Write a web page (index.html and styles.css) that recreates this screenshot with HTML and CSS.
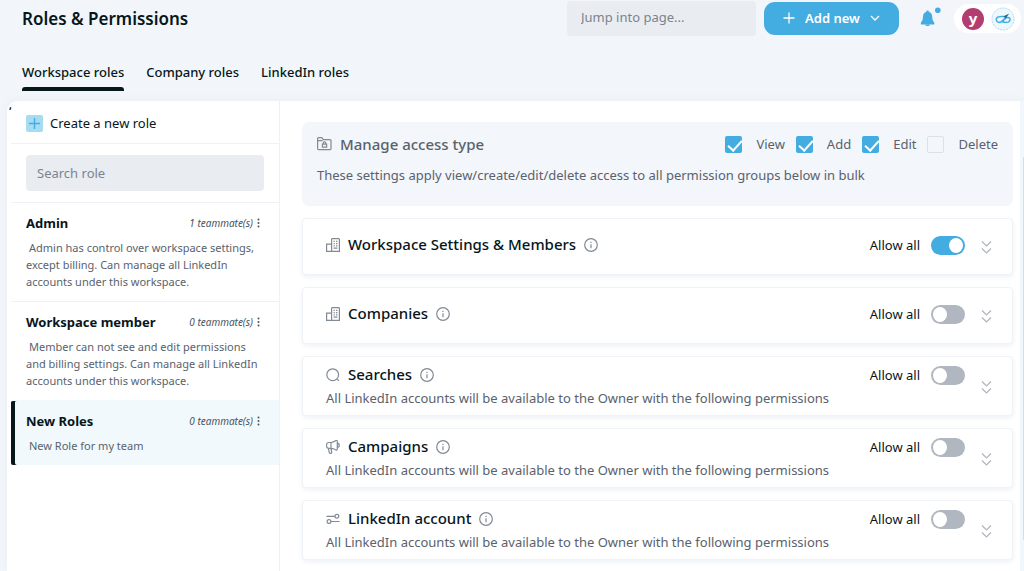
FILE: index.html
```html
<!DOCTYPE html>
<html lang="en">
<head>
<meta charset="utf-8">
<title>Roles &amp; Permissions</title>
<link rel="stylesheet" href="styles.css">
</head>
<body>
<svg class="sprite" aria-hidden="true">
  <symbol id="info" viewBox="0 0 14 14"><circle cx="7" cy="7" r="6.3"/><path d="M7 6.3v3.9M7 3.8v1.3"/></symbol>
  <symbol id="building" viewBox="0 0 14 14"><path d="M5.6 6.2H.6V13.300H13.400V1.200L12.800.6H6.200L5.600 1.200V13.300M7.600 3.300h1.200M10 3.300h1.400M7.600 5.600h1.200M10 5.600h1.400M7.600 7.900h1.200M10 7.900h1.400M7.600 10.200h3.800"/></symbol>
  <symbol id="chevrons" viewBox="0 0 11 15"><path d="M1 1.500l4.500 4.500L10 1.500M1 8.500L5.500 13 10 8.500"/></symbol>
  <symbol id="dots" viewBox="0 0 3 10"><circle cx="1.500" cy="1.500" r="1"/><circle cx="1.500" cy="5" r="1"/><circle cx="1.500" cy="8.500" r="1"/></symbol>
</svg>

<header class="topbar">
  <h1 class="page-title">Roles &amp; Permissions</h1>
  <input class="field jump" type="text" placeholder="Jump into page..." aria-label="Jump into page">
  <button class="add-button" type="button">
    <svg width="12" height="12" viewBox="0 0 12 12"><path d="M6 .5v11M.5 6h11"/></svg>
    Add new
    <svg width="10" height="6" viewBox="0 0 10 6"><path d="M1 1l4 4 4-4"/></svg>
  </button>
  <button class="bell" type="button" aria-label="Notifications">
    <svg width="22" height="22" viewBox="0 0 22 22"><path d="M7.200 5a1.400 1.400 0 0 1 2.800 0c2 .6 2.900 2 3.100 3.800.3 3.600.6 5.200 2.200 6.800v1.800H1.900v-1.800C3.500 14 3.800 12.400 4.100 8.800 4.300 7 5.200 5.600 7.200 5z"/><path d="M6.100 17.400h5c-.4 2.200-4.600 2.200-5 0z"/><circle cx="18.800" cy="3.300" r="2.800"/></svg>
  </button>
  <button class="account" type="button" aria-label="Account">
    <span class="avatar">y</span>
    <svg class="team" width="24" height="24" viewBox="0 0 24 24"><circle class="ring" cx="12" cy="12" r="11"/><path class="link" d="M12.800 9.500C10.500 9.300 7 9.200 5.700 11c-1.300 2 .2 4.400 2.500 4.400 3 0 4.300-4 7-4.800M11.500 14.800c2.300.8 6.200 1 7.300-1.200.9-1.900-.4-3.300-2.200-3.200-2.700.2-3.900 3.800-6 4.500"/><path class="pen" d="M12 9.400l6.200-3-3.600 5.300-1.200-1.400z"/></svg>
  </button>
</header>

<nav class="tabs">
  <a class="tab tab-active" href="#workspace">Workspace roles</a>
  <a class="tab" href="#company">Company roles</a>
  <a class="tab" href="#linkedin">LinkedIn roles</a>
</nav>

<main class="panel">
  <span class="stray">,</span>
  <aside class="sidebar">
    <button class="create" type="button">
      <svg width="17" height="17" viewBox="0 0 17 17"><rect width="17" height="17" rx="2"/><path d="M8.500 3v11M3 8.500h11"/></svg>
      Create a new role
    </button>
    <div class="search-row"><input class="field" type="text" placeholder="Search role" aria-label="Search role"></div>
    <section class="role">
      <div class="role-head"><h2>Admin</h2><em>1 teammate(s)</em><button type="button" aria-label="Admin options"><svg width="3" height="10"><use href="#dots"/></svg></button></div>
      <p>Admin has control over workspace settings, except billing. Can manage all LinkedIn accounts under this workspace.</p>
    </section>
    <section class="role">
      <div class="role-head"><h2>Workspace member</h2><em>0 teammate(s)</em><button type="button" aria-label="Workspace member options"><svg width="3" height="10"><use href="#dots"/></svg></button></div>
      <p>Member can not see and edit permissions and billing settings. Can manage all LinkedIn accounts under this workspace.</p>
    </section>
    <section class="role role-selected">
      <div class="role-head"><h2>New Roles</h2><em>0 teammate(s)</em><button type="button" aria-label="New Roles options"><svg width="3" height="10"><use href="#dots"/></svg></button></div>
      <p>New Role for my team</p>
    </section>
  </aside>

  <div class="content">
    <section class="bulk">
      <div class="bulk-head">
        <svg class="icon" width="15" height="14" viewBox="0 0 15 14"><path d="M.6 3.600V1.600a1 1 0 0 1 1-1h3.100l1.700 2h6.400a1.200 1.200 0 0 1 1.200 1.200v7.600a1.200 1.200 0 0 1-1.200 1.200h-11A1.200 1.200 0 0 1 .6 11.400V3.600h5M5.400 7.200h4.200v2.900H5.400zM6.200 7.200V6.200a1.300 1.300 0 0 1 2.600 0v1"/></svg>
        <h2>Manage access type</h2>
        <div class="checks">
          <label><input type="checkbox" checked>View</label>
          <label><input type="checkbox" checked>Add</label>
          <label><input type="checkbox" checked>Edit</label>
          <label><input type="checkbox">Delete</label>
        </div>
      </div>
      <p>These settings apply view/create/edit/delete access to all permission groups below in bulk</p>
    </section>

    <section class="card">
      <div class="card-body"><div class="card-head">
        <svg class="icon" width="14" height="14"><use href="#building"/></svg><h3>Workspace Settings &amp; Members</h3><svg class="icon info" width="14" height="14"><use href="#info"/></svg>
        <label class="allow">Allow all<input class="switch" type="checkbox" role="switch" checked></label>
      </div></div>
      <button class="expand" type="button" aria-label="Expand Workspace Settings &amp; Members"><svg width="11" height="15"><use href="#chevrons"/></svg></button>
    </section>
    <section class="card">
      <div class="card-body"><div class="card-head">
        <svg class="icon" width="14" height="14"><use href="#building"/></svg><h3>Companies</h3><svg class="icon info" width="14" height="14"><use href="#info"/></svg>
        <label class="allow">Allow all<input class="switch" type="checkbox" role="switch"></label>
      </div></div>
      <button class="expand" type="button" aria-label="Expand Companies"><svg width="11" height="15"><use href="#chevrons"/></svg></button>
    </section>
    <section class="card card-detailed">
      <div class="card-body"><div class="card-head">
        <svg class="icon" width="14" height="14" viewBox="0 0 14 14"><circle cx="6.700" cy="6.700" r="5.900"/><path d="M10.900 10.900l2 2"/></svg><h3>Searches</h3><svg class="icon info" width="14" height="14"><use href="#info"/></svg>
        <label class="allow">Allow all<input class="switch" type="checkbox" role="switch"></label>
      </div>
      <p>All LinkedIn accounts will be available to the Owner with the following permissions</p></div>
      <button class="expand" type="button" aria-label="Expand Searches"><svg width="11" height="15"><use href="#chevrons"/></svg></button>
    </section>
    <section class="card card-detailed">
      <div class="card-body"><div class="card-head">
        <svg class="icon" width="14" height="14" viewBox="0 0 14 14"><path d="M5 2.500H2.800A2.200 2.200 0 0 0 .6 4.700v1.500a2.200 2.200 0 0 0 2.200 2.200H5c2 0 3.500.6 5 1.500.6.400 1.300.1 1.300-.6V1.200c0-.7-.7-1-1.300-.6C8.500 1.600 7 2.500 5 2.500zM5 2.500v5.900M2.400 8.400l.8 4c.1.600.5.900 1 .9h.7c.6 0 .9-.5.800-1L5 8.400M11.300 3.100c2.600 0 2.600 4.300 0 4.300"/></svg><h3>Campaigns</h3><svg class="icon info" width="14" height="14"><use href="#info"/></svg>
        <label class="allow">Allow all<input class="switch" type="checkbox" role="switch"></label>
      </div>
      <p>All LinkedIn accounts will be available to the Owner with the following permissions</p></div>
      <button class="expand" type="button" aria-label="Expand Campaigns"><svg width="11" height="15"><use href="#chevrons"/></svg></button>
    </section>
    <section class="card card-detailed">
      <div class="card-body"><div class="card-head">
        <svg class="icon" width="14" height="14" viewBox="0 0 14 14"><circle cx="10.900" cy="4.300" r="1.900"/><path d="M.5 4.300H9M5 9.500h8.500"/><circle cx="3" cy="9.500" r="1.900"/></svg><h3>LinkedIn account</h3><svg class="icon info" width="14" height="14"><use href="#info"/></svg>
        <label class="allow">Allow all<input class="switch" type="checkbox" role="switch"></label>
      </div>
      <p>All LinkedIn accounts will be available to the Owner with the following permissions</p></div>
      <button class="expand" type="button" aria-label="Expand LinkedIn account"><svg width="11" height="15"><use href="#chevrons"/></svg></button>
    </section>
  </div>
  <div class="scroll-track"><div class="scroll-thumb"></div></div>
</main>
</body>
</html>
```
FILE: styles.css
```css
* { box-sizing: border-box; }
body {
  margin: 0;
  min-height: 100vh;
  display: flex;
  flex-direction: column;
  background: #f2f6fa;
  color: #07161b;
  font: 13px/20px "Noto Sans", sans-serif;
}
h1, h2, h3, p { margin: 0; }
button { border: 0; padding: 0; background: none; font: inherit; color: inherit; }
svg { flex: none; display: block; fill: none; }
.sprite { position: absolute; width: 0; height: 0; }
.icon { stroke: #828a94; stroke-width: 1.2; }

.topbar { display: flex; align-items: center; height: 37px; padding: 0 3px 0 22px; }
.page-title { margin-right: auto; font-size: 17px; font-weight: 600; }
.field {
  display: block;
  width: 100%;
  height: 36px;
  border: 0;
  border-radius: 4px;
  padding: 0 11px;
  background: #e9edf2;
  font: inherit;
  color: #07161b;
}
.field::placeholder { color: #7b838e; opacity: 1; }
.jump { width: 189px; height: 35px; margin-right: 8px; padding: 0 14px 4px; }
.add-button {
  display: flex;
  align-items: center;
  justify-content: center;
  gap: 10px;
  width: 135px;
  height: 33px;
  padding-bottom: 1px;
  border-radius: 11px;
  background: #43ace1;
  color: #fff;
  font-weight: 600;
}
.add-button svg { stroke: #fff; stroke-width: 1.3; }
.bell { margin: 0 13px 0 20px; padding-bottom: 1px; }
.bell svg { fill: #43ace1; }
.account {
  display: flex;
  align-items: center;
  gap: 7px;
  height: 29px;
  padding: 0 6px 0 8px;
  border-radius: 15px;
  background: #fff;
}
.avatar {
  width: 22px;
  height: 22px;
  border-radius: 50%;
  background: #b43d70;
  color: #fff;
  font-size: 15px;
  font-weight: 700;
}
.ring { fill: #edf8fd; stroke: #a9daf2; stroke-width: 1; stroke-dasharray: 2 1; }
.link { stroke: #43ace1; stroke-width: 1.5; }
.pen { fill: #276b8c; }

.tabs { display: flex; gap: 22px; height: 64px; padding: 25px 22px 0; }
.tab { height: 29px; border-bottom: 3px solid transparent; color: inherit; font-weight: 500; text-decoration: none; }
.tab-active { position: relative; }
.tab-active::after {
  content: "";
  position: absolute;
  inset: auto 0 -3px;
  height: 4px;
  border-radius: 3px 3px 0 0;
  background: #07161b;
}

.panel {
  position: relative;
  flex: 1;
  display: flex;
  margin-left: 7px;
  border-radius: 10px 0 0 0;
  background: #fff;
  box-shadow: 0 0 8px #e8eef4;
}
.stray { position: absolute; left: 2px; top: 0; font-size: 10px; font-weight: 700; line-height: 9px; }
.sidebar { width: 269px; flex: none; margin-left: 4px; border-right: 1px solid #eef1f5; }
.create { display: flex; align-items: center; gap: 7px; width: 100%; height: 42px; padding: 2px 15px 0; }
.create rect { fill: #a5dcf2; }
.create path { stroke: #43ace1; stroke-width: 1.4; }
.search-row { padding: 11px 15px; border-top: 1px solid #eef1f5; }
.role { padding: 10px 19px 11px 15px; border-top: 1px solid #eef1f5; }
.role-head { display: flex; align-items: center; gap: 4px; margin-bottom: 6px; }
.role h2 { margin-right: auto; font-size: 13px; font-weight: 700; }
.role em { font-size: 10px; color: #4b545e; }
.role button svg { fill: #4b545e; }
.role p { margin-right: -5px; font-size: 11px; line-height: 17px; color: #59626d; text-indent: 3px; }
.role-selected { border-top-color: #f1f9fd; background: #f1f9fd; box-shadow: inset 4px 0 #07161b; border-radius: 2px 0 0 2px; }

.content { flex: 1; min-width: 0; display: flex; flex-direction: column; gap: 12px; padding: 21px 7px 10px 22px; }
.bulk { min-height: 84px; padding: 12px 15px; border-radius: 7px; background: #f3f6fa; color: #59626d; }
.bulk-head { display: flex; align-items: center; gap: 8px; height: 20px; margin-bottom: 11px; }
.bulk h2 { font-size: 15px; font-weight: 500; }
.checks { display: flex; gap: 11px; margin-left: auto; }
.checks label { display: flex; align-items: center; gap: 14px; }
.checks input {
  appearance: none;
  width: 17px;
  height: 17px;
  margin: 0;
  border: 1px solid #dce1e7;
  border-radius: 2px;
}
.checks input:checked { border: 0; background: #43ace1; }
.checks input:checked::after {
  content: "";
  display: block;
  width: 6px;
  height: 12px;
  margin: 1px 0 0 6px;
  border: solid #fff;
  border-width: 0 2px 2px 0;
  transform: rotate(42deg);
}

.card {
  display: flex;
  align-items: center;
  gap: 16px;
  min-height: 57px;
  padding: 0 20px 3px 23px;
  border: 1px solid #eff2f7;
  border-radius: 4px;
  background: #fff;
  box-shadow: 0 2px 5px #eef1f6;
}
.card-detailed { min-height: 60px; padding-bottom: 0; }
.card-body { flex: 1; min-width: 0; }
.card-head { display: flex; align-items: center; gap: 8px; height: 22px; }
.card h3 { padding-bottom: 2px; font-size: 15px; font-weight: 500; }
.card p { margin-top: 2px; color: #59626d; }
.allow { display: flex; align-items: center; gap: 11px; margin-left: auto; }
.switch {
  appearance: none;
  width: 34px;
  height: 19px;
  margin: 0;
  padding: 2px;
  border-radius: 10px;
  background: #b0b7c0;
}
.switch::after { content: ""; display: block; width: 14px; height: 15px; border-radius: 50%; background: #fff; }
.switch:checked { background: #43ace1; }
.switch:checked::after { margin-left: auto; }
.expand { padding-top: 5px; }
.card-detailed .expand { padding-top: 3px; }
.expand svg { stroke: #b0b5bc; stroke-width: 1.2; }

.scroll-track { width: 4px; padding-top: 56px; background: #f0f8fd; }
.scroll-thumb { height: 383px; margin-left: 3px; background: #c5e5f5; }
```
